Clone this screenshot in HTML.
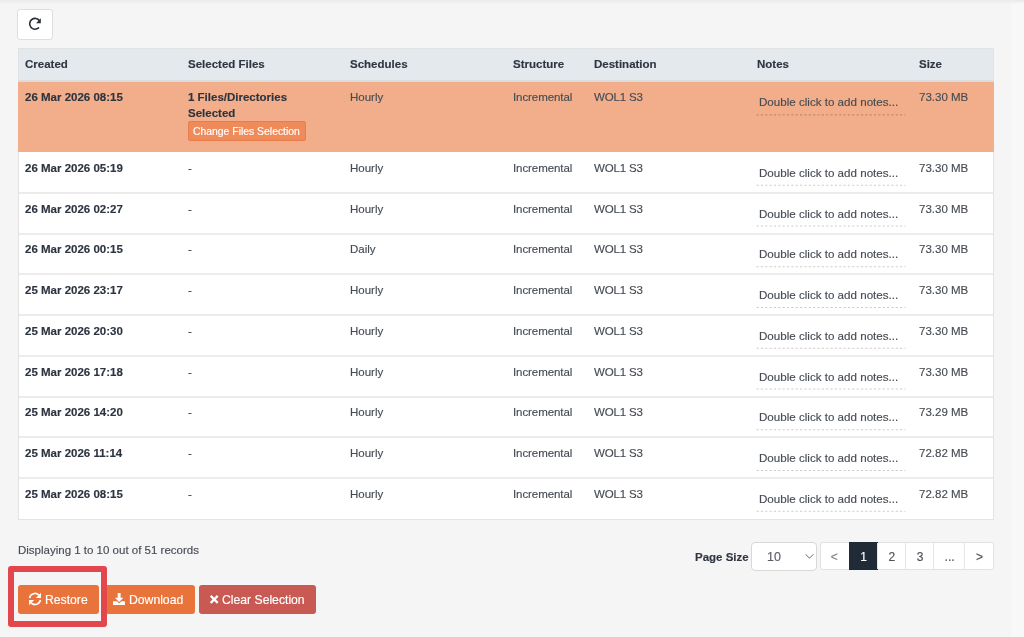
<!DOCTYPE html>
<html><head><meta charset="utf-8"><style>
html,body{margin:0;padding:0;}
body{width:1024px;height:637px;overflow:hidden;position:relative;background:#f5f5f5;font-family:"Liberation Sans",sans-serif;}
.t{position:absolute;will-change:transform;white-space:nowrap;font-size:11.5px;line-height:16px;color:#464c54;-webkit-text-stroke:0.15px currentColor;}
.b{font-weight:bold;color:#2c3440;}
.hd{font-weight:bold;color:#2f3640;}
.abs{position:absolute;box-sizing:border-box;}
</style></head><body>
<div class="abs" style="left:1011px;top:0;width:13px;height:637px;background:#f8f8f8"></div>
<div class="abs" style="left:0;top:0;width:1024px;height:4px;background:linear-gradient(#eaeaea,rgba(245,245,245,0))"></div>
<div class="abs" style="left:17px;top:9px;width:35.5px;height:30.5px;background:#fff;border:1px solid #dcdfe2;border-radius:3px"></div>
<svg class="abs" style="left:28px;top:17px" width="14" height="14" viewBox="0 0 14 14"><path d="M10.57 10.94 A5.4 5.4 0 1 1 11.5 3.7" fill="none" stroke="#2a2f36" stroke-width="1.6" stroke-linecap="round"/><path d="M12.8 1.2 L12.8 6.2 L8.1 6.2 Z" fill="#2a2f36"/></svg>
<div class="abs" style="left:17.5px;top:48px;width:976.0px;height:472px;background:#fff;border:1px solid #e3e3e3"></div>
<div class="abs" style="left:17.5px;top:48px;width:976.0px;height:34px;background:#e4e9ed;border:1px solid #e0e2e4;border-bottom:2px solid #dadcde"></div>
<div class="abs" style="left:17.5px;top:82px;width:976.0px;height:70px;background:#f2ae8a"></div>
<div class="abs" style="left:18.5px;top:192px;width:974.0px;height:2px;background:#ececec"></div>
<div class="abs" style="left:18.5px;top:233px;width:974.0px;height:2px;background:#ececec"></div>
<div class="abs" style="left:18.5px;top:273px;width:974.0px;height:2px;background:#ececec"></div>
<div class="abs" style="left:18.5px;top:314px;width:974.0px;height:2px;background:#ececec"></div>
<div class="abs" style="left:18.5px;top:355px;width:974.0px;height:2px;background:#ececec"></div>
<div class="abs" style="left:18.5px;top:396px;width:974.0px;height:2px;background:#ececec"></div>
<div class="abs" style="left:18.5px;top:436px;width:974.0px;height:2px;background:#ececec"></div>
<div class="abs" style="left:18.5px;top:477px;width:974.0px;height:2px;background:#ececec"></div>
<div class="t hd" style="left:25.3px;top:56.00px;">Created</div>
<div class="t hd" style="left:187.5px;top:56.00px;">Selected Files</div>
<div class="t hd" style="left:350.2px;top:56.00px;">Schedules</div>
<div class="t hd" style="left:512.8px;top:56.00px;">Structure</div>
<div class="t hd" style="left:594.0px;top:56.00px;">Destination</div>
<div class="t hd" style="left:757px;top:56.00px;">Notes</div>
<div class="t hd" style="left:919.0px;top:56.00px;">Size</div>
<div class="t b" style="left:25.3px;top:89.40px;">26 Mar 2026 08:15</div>
<div class="t b" style="left:187.5px;top:89.40px;">1 Files/Directories</div>
<div class="t b" style="left:187.5px;top:105.20px;">Selected</div>
<div class="abs" style="left:188px;top:121px;width:118px;height:19.5px;background:#ef8b5a;border:1px solid #ea7d47;border-radius:2px"></div>
<div class="t " style="left:193.1px;top:124.10px;font-size:10.4px;color:#fff">Change Files Selection</div>
<div class="t " style="left:350.2px;top:89.40px;">Hourly</div>
<div class="t " style="left:512.8px;top:89.40px;letter-spacing:-0.08px">Incremental</div>
<div class="t " style="left:594.0px;top:89.40px;letter-spacing:-0.15px">WOL1 S3</div>
<div class="t " style="left:758.8px;top:94.40px;font-size:11.6px">Double click to add notes...</div>
<svg class="abs" style="left:756px;top:113px" width="150" height="3"><line x1="0.5" y1="1.90" x2="149.5" y2="1.90" stroke="rgba(0,0,0,0.2)" stroke-width="1.1" stroke-dasharray="2.2 2.15"/></svg>
<div class="t " style="left:919.0px;top:89.40px;">73.30 MB</div>
<div class="t b" style="left:25.3px;top:159.80px;">26 Mar 2026 05:19</div>
<div class="t " style="left:187.5px;top:159.80px;">-</div>
<div class="t " style="left:350.2px;top:159.80px;">Hourly</div>
<div class="t " style="left:512.8px;top:159.80px;letter-spacing:-0.08px">Incremental</div>
<div class="t " style="left:594.0px;top:159.80px;letter-spacing:-0.15px">WOL1 S3</div>
<div class="t " style="left:758.8px;top:164.80px;font-size:11.6px">Double click to add notes...</div>
<svg class="abs" style="left:756px;top:184px" width="150" height="3"><line x1="0.5" y1="1.30" x2="149.5" y2="1.30" stroke="rgba(0,0,0,0.2)" stroke-width="1.1" stroke-dasharray="2.2 2.15"/></svg>
<div class="t " style="left:919.0px;top:159.80px;">73.30 MB</div>
<div class="t b" style="left:25.3px;top:200.55px;">26 Mar 2026 02:27</div>
<div class="t " style="left:187.5px;top:200.55px;">-</div>
<div class="t " style="left:350.2px;top:200.55px;">Hourly</div>
<div class="t " style="left:512.8px;top:200.55px;letter-spacing:-0.08px">Incremental</div>
<div class="t " style="left:594.0px;top:200.55px;letter-spacing:-0.15px">WOL1 S3</div>
<div class="t " style="left:758.8px;top:205.55px;font-size:11.6px">Double click to add notes...</div>
<svg class="abs" style="left:756px;top:225px" width="150" height="3"><line x1="0.5" y1="1.05" x2="149.5" y2="1.05" stroke="rgba(0,0,0,0.2)" stroke-width="1.1" stroke-dasharray="2.2 2.15"/></svg>
<div class="t " style="left:919.0px;top:200.55px;">73.30 MB</div>
<div class="t b" style="left:25.3px;top:241.30px;">26 Mar 2026 00:15</div>
<div class="t " style="left:187.5px;top:241.30px;">-</div>
<div class="t " style="left:350.2px;top:241.30px;">Daily</div>
<div class="t " style="left:512.8px;top:241.30px;letter-spacing:-0.08px">Incremental</div>
<div class="t " style="left:594.0px;top:241.30px;letter-spacing:-0.15px">WOL1 S3</div>
<div class="t " style="left:758.8px;top:246.30px;font-size:11.6px">Double click to add notes...</div>
<svg class="abs" style="left:756px;top:265px" width="150" height="3"><line x1="0.5" y1="1.80" x2="149.5" y2="1.80" stroke="rgba(0,0,0,0.2)" stroke-width="1.1" stroke-dasharray="2.2 2.15"/></svg>
<div class="t " style="left:919.0px;top:241.30px;">73.30 MB</div>
<div class="t b" style="left:25.3px;top:282.05px;">25 Mar 2026 23:17</div>
<div class="t " style="left:187.5px;top:282.05px;">-</div>
<div class="t " style="left:350.2px;top:282.05px;">Hourly</div>
<div class="t " style="left:512.8px;top:282.05px;letter-spacing:-0.08px">Incremental</div>
<div class="t " style="left:594.0px;top:282.05px;letter-spacing:-0.15px">WOL1 S3</div>
<div class="t " style="left:758.8px;top:287.05px;font-size:11.6px">Double click to add notes...</div>
<svg class="abs" style="left:756px;top:306px" width="150" height="3"><line x1="0.5" y1="1.55" x2="149.5" y2="1.55" stroke="rgba(0,0,0,0.2)" stroke-width="1.1" stroke-dasharray="2.2 2.15"/></svg>
<div class="t " style="left:919.0px;top:282.05px;">73.30 MB</div>
<div class="t b" style="left:25.3px;top:322.80px;">25 Mar 2026 20:30</div>
<div class="t " style="left:187.5px;top:322.80px;">-</div>
<div class="t " style="left:350.2px;top:322.80px;">Hourly</div>
<div class="t " style="left:512.8px;top:322.80px;letter-spacing:-0.08px">Incremental</div>
<div class="t " style="left:594.0px;top:322.80px;letter-spacing:-0.15px">WOL1 S3</div>
<div class="t " style="left:758.8px;top:327.80px;font-size:11.6px">Double click to add notes...</div>
<svg class="abs" style="left:756px;top:347px" width="150" height="3"><line x1="0.5" y1="1.30" x2="149.5" y2="1.30" stroke="rgba(0,0,0,0.2)" stroke-width="1.1" stroke-dasharray="2.2 2.15"/></svg>
<div class="t " style="left:919.0px;top:322.80px;">73.30 MB</div>
<div class="t b" style="left:25.3px;top:363.55px;">25 Mar 2026 17:18</div>
<div class="t " style="left:187.5px;top:363.55px;">-</div>
<div class="t " style="left:350.2px;top:363.55px;">Hourly</div>
<div class="t " style="left:512.8px;top:363.55px;letter-spacing:-0.08px">Incremental</div>
<div class="t " style="left:594.0px;top:363.55px;letter-spacing:-0.15px">WOL1 S3</div>
<div class="t " style="left:758.8px;top:368.55px;font-size:11.6px">Double click to add notes...</div>
<svg class="abs" style="left:756px;top:388px" width="150" height="3"><line x1="0.5" y1="1.05" x2="149.5" y2="1.05" stroke="rgba(0,0,0,0.2)" stroke-width="1.1" stroke-dasharray="2.2 2.15"/></svg>
<div class="t " style="left:919.0px;top:363.55px;">73.30 MB</div>
<div class="t b" style="left:25.3px;top:404.30px;">25 Mar 2026 14:20</div>
<div class="t " style="left:187.5px;top:404.30px;">-</div>
<div class="t " style="left:350.2px;top:404.30px;">Hourly</div>
<div class="t " style="left:512.8px;top:404.30px;letter-spacing:-0.08px">Incremental</div>
<div class="t " style="left:594.0px;top:404.30px;letter-spacing:-0.15px">WOL1 S3</div>
<div class="t " style="left:758.8px;top:409.30px;font-size:11.6px">Double click to add notes...</div>
<svg class="abs" style="left:756px;top:428px" width="150" height="3"><line x1="0.5" y1="1.80" x2="149.5" y2="1.80" stroke="rgba(0,0,0,0.2)" stroke-width="1.1" stroke-dasharray="2.2 2.15"/></svg>
<div class="t " style="left:919.0px;top:404.30px;">73.29 MB</div>
<div class="t b" style="left:25.3px;top:445.05px;">25 Mar 2026 11:14</div>
<div class="t " style="left:187.5px;top:445.05px;">-</div>
<div class="t " style="left:350.2px;top:445.05px;">Hourly</div>
<div class="t " style="left:512.8px;top:445.05px;letter-spacing:-0.08px">Incremental</div>
<div class="t " style="left:594.0px;top:445.05px;letter-spacing:-0.15px">WOL1 S3</div>
<div class="t " style="left:758.8px;top:450.05px;font-size:11.6px">Double click to add notes...</div>
<svg class="abs" style="left:756px;top:469px" width="150" height="3"><line x1="0.5" y1="1.55" x2="149.5" y2="1.55" stroke="rgba(0,0,0,0.2)" stroke-width="1.1" stroke-dasharray="2.2 2.15"/></svg>
<div class="t " style="left:919.0px;top:445.05px;">72.82 MB</div>
<div class="t b" style="left:25.3px;top:485.80px;">25 Mar 2026 08:15</div>
<div class="t " style="left:187.5px;top:485.80px;">-</div>
<div class="t " style="left:350.2px;top:485.80px;">Hourly</div>
<div class="t " style="left:512.8px;top:485.80px;letter-spacing:-0.08px">Incremental</div>
<div class="t " style="left:594.0px;top:485.80px;letter-spacing:-0.15px">WOL1 S3</div>
<div class="t " style="left:758.8px;top:490.80px;font-size:11.6px">Double click to add notes...</div>
<svg class="abs" style="left:756px;top:510px" width="150" height="3"><line x1="0.5" y1="1.30" x2="149.5" y2="1.30" stroke="rgba(0,0,0,0.2)" stroke-width="1.1" stroke-dasharray="2.2 2.15"/></svg>
<div class="t " style="left:919.0px;top:485.80px;">72.82 MB</div>
<div class="t " style="left:17.8px;top:542.10px;">Displaying 1 to 10 out of 51 records</div>
<div class="t hd" style="left:694.5px;top:549.00px;">Page Size</div>
<div class="abs" style="left:751px;top:541.5px;width:65.5px;height:29.5px;background:#fff;border:1px solid #d8d8d8;border-radius:4px"></div>
<div class="t " style="left:766.5px;top:549.00px;font-size:12.5px;color:#5a5f66">10</div>
<svg class="abs" style="left:805px;top:553px" width="9" height="7" viewBox="0 0 9 7"><path d="M0.6 1.3 L4.5 5.2 L8.4 1.3" fill="none" stroke="#666" stroke-width="1"/></svg>
<div class="abs" style="left:820px;top:542px;width:174px;height:28px;background:#fff;border:1px solid #e2e2e2;border-radius:3px"></div>
<div class="t" style="left:820.2px;width:28.40px;text-align:center;top:549px;color:#80858c;font-size:12px">&lt;</div>
<div class="abs" style="left:848.6px;top:542px;width:29.10px;height:28px;background:#212b37"></div>
<div class="t" style="left:848.6px;width:29.10px;text-align:center;top:549px;color:#fff;font-size:12px">1</div>
<div class="abs" style="left:877.2px;top:543px;width:1px;height:26px;background:#e6e6e6"></div>
<div class="t" style="left:877.7px;width:27.90px;text-align:center;top:549px;color:#4a515b;font-size:12px">2</div>
<div class="abs" style="left:905.1px;top:543px;width:1px;height:26px;background:#e6e6e6"></div>
<div class="t" style="left:905.6px;width:28.10px;text-align:center;top:549px;color:#4a515b;font-size:12px">3</div>
<div class="abs" style="left:933.2px;top:543px;width:1px;height:26px;background:#e6e6e6"></div>
<div class="t" style="left:933.7px;width:31.20px;text-align:center;top:549px;color:#4a515b;font-size:12px">...</div>
<div class="abs" style="left:964.4px;top:543px;width:1px;height:26px;background:#e6e6e6"></div>
<div class="t" style="left:964.9px;width:28.80px;text-align:center;top:549px;color:#4a515b;font-size:12px">&gt;</div>
<div class="abs" style="left:17.5px;top:584.5px;width:81.0px;height:29.5px;background:#e8733b;border-radius:3px"></div>
<svg class="abs" style="left:28px;top:592px" width="14" height="14" viewBox="0 0 14 14"><path d="M1.58 6.05 A5.5 5.5 0 0 1 10.89 3.11" fill="none" stroke="#fff" stroke-width="1.7"/><path d="M13 0.8 L13 6 L7.8 6 Z" fill="#fff"/><path d="M12.42 7.95 A5.5 5.5 0 0 1 3.11 10.89" fill="none" stroke="#fff" stroke-width="1.7"/><path d="M1 8 L1 13.2 L6.2 8 Z" fill="#fff"/></svg>
<div class="t " style="left:0px;top:591.50px;color:#fff;font-size:12.2px;left:45px">Restore</div>
<div class="abs" style="left:105px;top:584.5px;width:90px;height:29.5px;background:#e8733b;border-radius:3px"></div>
<svg class="abs" style="left:112px;top:592px" width="14" height="14" viewBox="0 0 14 14"><rect x="5.7" y="1" width="2.9" height="5.2" fill="#fff"/><path d="M2.9 5.7 L11.4 5.7 L7.15 10 Z" fill="#fff"/><path d="M1 9.3 L5 9.3 L7.15 11.4 L9.3 9.3 L12.9 9.3 L12.9 12.9 L1 12.9 Z" fill="#fff"/></svg>
<div class="t " style="left:0px;top:591.50px;color:#fff;font-size:12.2px;left:129px">Download</div>
<div class="abs" style="left:198.75px;top:584.5px;width:117.25px;height:29.5px;background:#c85a53;border-radius:3px"></div>
<svg class="abs" style="left:210px;top:595px" width="9" height="9" viewBox="0.3 0.1 9 9"><path d="M1 1 L8 8 M8 1 L1 8" stroke="#fff" stroke-width="2.2"/></svg>
<div class="t " style="left:0px;top:591.50px;color:#fff;font-size:12.2px;left:221.6px">Clear Selection</div>
<div class="abs" style="left:8px;top:566px;width:99px;height:61px;border:6px solid #e3474e;border-radius:3px"></div>
</body></html>
